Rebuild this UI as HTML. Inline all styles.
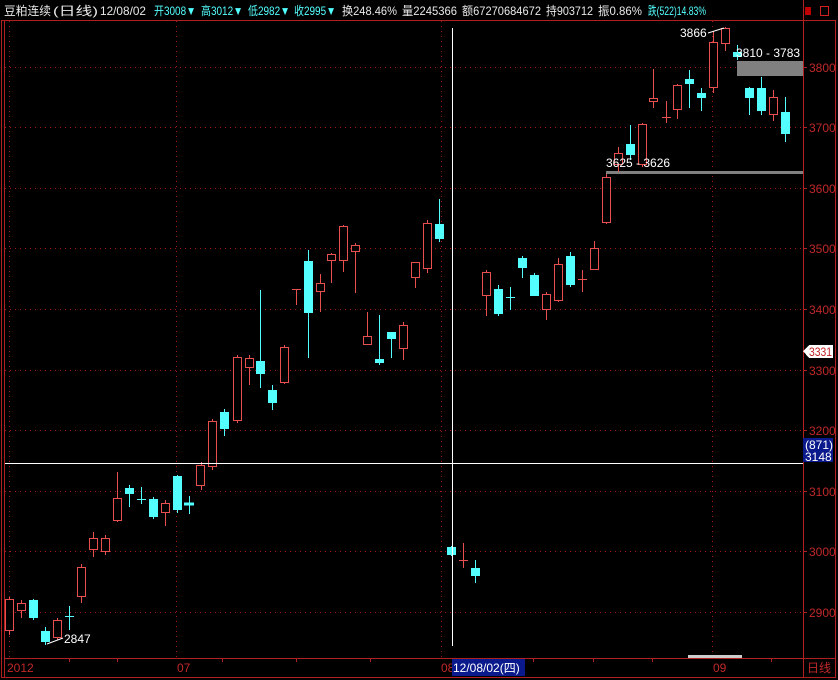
<!DOCTYPE html>
<html><head><meta charset="utf-8"><style>
html,body{margin:0;padding:0;background:#000;width:838px;height:680px;overflow:hidden}
svg{display:block}
text{font-family:"Liberation Sans","Noto Sans CJK SC",sans-serif;font-size:12px}
.r line,.r rect{stroke:#e85050;fill:#000}
.c line{stroke:#54ffff}
.c rect{fill:#54ffff;stroke:#54ffff}
.g{stroke:#a01818;stroke-dasharray:1 4;stroke-width:1}
.ax{fill:#c02828}
.w{fill:#e8e8e8}.cy{fill:#54ffff}
</style></head><body>
<svg width="838" height="680" viewBox="0 0 838 680" shape-rendering="crispEdges">
<rect x="0" y="0" width="838" height="680" fill="#000"/>
<!-- header -->
<text class="w" x="4" y="15" textLength="47" lengthAdjust="spacingAndGlyphs">豆粕连续</text>
<text class="w" x="53" y="15" textLength="45" lengthAdjust="spacingAndGlyphs">(日线)</text>
<text class="w" x="100" y="15" textLength="46" lengthAdjust="spacingAndGlyphs">12/08/02</text>
<text class="cy" x="154" y="15" textLength="42" lengthAdjust="spacingAndGlyphs">开3008▼</text>
<text class="cy" x="201" y="15" textLength="42" lengthAdjust="spacingAndGlyphs">高3012▼</text>
<text class="cy" x="248" y="15" textLength="42" lengthAdjust="spacingAndGlyphs">低2982▼</text>
<text class="cy" x="294" y="15" textLength="42" lengthAdjust="spacingAndGlyphs">收2995▼</text>
<text class="w" x="342" y="15" textLength="55" lengthAdjust="spacingAndGlyphs">换248.46%</text>
<text class="w" x="402" y="15" textLength="55" lengthAdjust="spacingAndGlyphs">量2245366</text>
<text class="w" x="462" y="15" textLength="79" lengthAdjust="spacingAndGlyphs">额67270684672</text>
<text class="w" x="546" y="15" textLength="47" lengthAdjust="spacingAndGlyphs">持903712</text>
<text class="w" x="598" y="15" textLength="44" lengthAdjust="spacingAndGlyphs">振0.86%</text>
<text class="cy" x="648" y="15" textLength="58" lengthAdjust="spacingAndGlyphs">跌(522)14.83%</text>
<rect x="805" y="7" width="6" height="8" fill="#c00000"/>
<rect x="820.5" y="6.5" width="8" height="9" fill="none" stroke="#d02020"/>
<!-- frame -->
<rect x="1.5" y="20.5" width="834" height="657" fill="none" stroke="#b02020"/>
<line x1="4.5" y1="21" x2="4.5" y2="677" stroke="#b02020"/>
<line x1="803.5" y1="0" x2="803.5" y2="677" stroke="#b02020"/>
<line x1="5" y1="658.5" x2="835" y2="658.5" stroke="#b02020"/>
<!-- grid -->
<g class="g">
<line x1="5" y1="67.5" x2="803" y2="67.5"/><line x1="5" y1="127.5" x2="803" y2="127.5"/>
<line x1="5" y1="188.5" x2="803" y2="188.5"/><line x1="5" y1="248.5" x2="803" y2="248.5"/>
<line x1="5" y1="309.5" x2="803" y2="309.5"/><line x1="5" y1="370.5" x2="803" y2="370.5"/>
<line x1="5" y1="430.5" x2="803" y2="430.5"/><line x1="5" y1="491.5" x2="803" y2="491.5"/>
<line x1="5" y1="551.5" x2="803" y2="551.5"/><line x1="5" y1="612.5" x2="803" y2="612.5"/>
<line x1="9.5" y1="21" x2="9.5" y2="658"/><line x1="176.5" y1="21" x2="176.5" y2="658"/>
<line x1="441.5" y1="21" x2="441.5" y2="658"/><line x1="712.5" y1="21" x2="712.5" y2="658"/>
</g>
<!-- axis labels -->
<g class="ax">
<text x="809" y="72">3800</text><text x="809" y="132">3700</text><text x="809" y="193">3600</text>
<text x="809" y="253">3500</text><text x="809" y="314">3400</text><text x="809" y="375">3300</text>
<text x="809" y="435">3200</text><text x="809" y="496">3100</text><text x="809" y="556">3000</text>
<text x="809" y="617">2900</text>
<text x="7" y="672">2012</text><text x="177" y="672">07</text><text x="441" y="672">08</text>
<text x="713" y="672">09</text><text x="807" y="672">日线</text>
</g>
<g stroke="#b02020">
<line x1="803" y1="67.5" x2="807" y2="67.5"/><line x1="803" y1="127.5" x2="807" y2="127.5"/><line x1="803" y1="188.5" x2="807" y2="188.5"/><line x1="803" y1="248.5" x2="807" y2="248.5"/><line x1="803" y1="309.5" x2="807" y2="309.5"/><line x1="803" y1="370.5" x2="807" y2="370.5"/><line x1="803" y1="430.5" x2="807" y2="430.5"/><line x1="803" y1="491.5" x2="807" y2="491.5"/><line x1="803" y1="551.5" x2="807" y2="551.5"/><line x1="803" y1="612.5" x2="807" y2="612.5"/>
<line x1="69.5" y1="659" x2="69.5" y2="662"/><line x1="117.5" y1="659" x2="117.5" y2="662"/><line x1="222.5" y1="659" x2="222.5" y2="662"/><line x1="296.5" y1="659" x2="296.5" y2="662"/><line x1="370.5" y1="659" x2="370.5" y2="662"/><line x1="533.5" y1="659" x2="533.5" y2="662"/><line x1="593.5" y1="659" x2="593.5" y2="662"/><line x1="652.5" y1="659" x2="652.5" y2="662"/><line x1="771.5" y1="659" x2="771.5" y2="662"/>
</g>
<!-- price box 3331 -->
<polygon points="803,351 809,345 833,345 833,358 809,358" fill="#fff"/>
<text x="809" y="356" fill="#c02020" textLength="23" lengthAdjust="spacingAndGlyphs">3331</text>
<rect x="803" y="438" width="30" height="24" fill="#0a1a8c"/>
<text x="805" y="449" fill="#fff">(871)</text><text x="805" y="461" fill="#fff">3148</text>
<rect x="452" y="659" width="73" height="17" fill="#0a1a8c"/>
<text x="453" y="672" fill="#fff">12/08/02(四)</text>
<rect x="688" y="655" width="54" height="3" fill="#ccc"/>
<!-- markers -->
<rect x="737" y="61" width="66" height="15" fill="#808080"/>
<rect x="606" y="171" width="197" height="3" fill="#808080"/>
<!-- candles red -->
<g class="r">
<line x1="9.5" y1="597" x2="9.5" y2="635"/><rect x="5.5" y="599.5" width="8" height="31"/>
<line x1="21.5" y1="600" x2="21.5" y2="618"/><rect x="17.5" y="603.5" width="8" height="7"/>
<line x1="57.5" y1="618" x2="57.5" y2="640"/><rect x="53.5" y="620.5" width="8" height="17"/>
<line x1="81.5" y1="564" x2="81.5" y2="603"/><rect x="77.5" y="567.5" width="8" height="29"/>
<line x1="93.5" y1="532" x2="93.5" y2="557"/><rect x="89.5" y="538.5" width="8" height="11"/>
<line x1="105.5" y1="535" x2="105.5" y2="555"/><rect x="101.5" y="538.5" width="8" height="13"/>
<line x1="117.5" y1="472" x2="117.5" y2="522"/><rect x="113.5" y="498.5" width="8" height="22"/>
<line x1="165.5" y1="500" x2="165.5" y2="526"/><rect x="161.5" y="503.5" width="8" height="9"/>
<line x1="201.5" y1="462" x2="201.5" y2="490"/><rect x="196.5" y="465.5" width="8" height="20"/>
<line x1="212.5" y1="419" x2="212.5" y2="470"/><rect x="208.5" y="421.5" width="8" height="45"/>
<line x1="237.5" y1="355" x2="237.5" y2="423"/><rect x="233.5" y="357.5" width="8" height="63"/>
<line x1="249.5" y1="355" x2="249.5" y2="385"/><rect x="245.5" y="358.5" width="8" height="9"/>
<line x1="284.5" y1="345" x2="284.5" y2="384"/><rect x="280.5" y="347.5" width="8" height="35"/>
<line x1="296.5" y1="289.5" x2="296.5" y2="305"/><line x1="292" y1="289.5" x2="301" y2="289.5"/>
<line x1="320.5" y1="274" x2="320.5" y2="312"/><rect x="316.5" y="283.5" width="8" height="8"/>
<line x1="331.5" y1="253" x2="331.5" y2="283"/><rect x="327.5" y="254.5" width="8" height="6"/>
<line x1="343.5" y1="225" x2="343.5" y2="272"/><rect x="339.5" y="226.5" width="8" height="34"/>
<line x1="355.5" y1="243" x2="355.5" y2="293"/><rect x="351.5" y="245.5" width="8" height="6"/>
<line x1="367.5" y1="312" x2="367.5" y2="344"/><rect x="363.5" y="336.5" width="8" height="8"/>
<line x1="403.5" y1="322" x2="403.5" y2="360"/><rect x="399.5" y="325.5" width="8" height="23"/>
<line x1="415.5" y1="262" x2="415.5" y2="288"/><rect x="411.5" y="262.5" width="8" height="15"/>
<line x1="427.5" y1="220" x2="427.5" y2="273"/><rect x="423.5" y="223.5" width="8" height="45"/>
<line x1="463.5" y1="543" x2="463.5" y2="568"/><line x1="459" y1="560.5" x2="468" y2="560.5"/>
<line x1="486.5" y1="270" x2="486.5" y2="316"/><rect x="482.5" y="272.5" width="8" height="23"/>
<line x1="546.5" y1="292" x2="546.5" y2="320"/><rect x="542.5" y="294.5" width="8" height="15"/>
<line x1="558.5" y1="258" x2="558.5" y2="302"/><rect x="554.5" y="264.5" width="8" height="36"/>
<line x1="582.5" y1="270" x2="582.5" y2="292"/><line x1="578" y1="279.5" x2="587" y2="279.5"/>
<line x1="594.5" y1="241" x2="594.5" y2="270"/><rect x="590.5" y="248.5" width="8" height="21"/>
<line x1="606.5" y1="174" x2="606.5" y2="224"/><rect x="602.5" y="177.5" width="8" height="45"/>
<line x1="618.5" y1="147" x2="618.5" y2="172"/><rect x="614.5" y="153.5" width="8" height="11"/>
<line x1="642.5" y1="123" x2="642.5" y2="167"/><rect x="638.5" y="124.5" width="8" height="40"/>
<line x1="653.5" y1="69" x2="653.5" y2="108"/><rect x="649.5" y="98.5" width="8" height="3"/>
<line x1="666.5" y1="101" x2="666.5" y2="123"/><line x1="662" y1="117.5" x2="671" y2="117.5"/>
<line x1="677.5" y1="84" x2="677.5" y2="119"/><rect x="673.5" y="85.5" width="8" height="24"/>
<line x1="713.5" y1="31" x2="713.5" y2="93"/><rect x="709.5" y="42.5" width="8" height="45"/>
<line x1="725.5" y1="27" x2="725.5" y2="51"/><rect x="721.5" y="28.5" width="8" height="15"/>
<line x1="773.5" y1="90" x2="773.5" y2="121"/><rect x="769.5" y="97.5" width="8" height="17"/>
</g>
<!-- candles cyan -->
<g class="c">
<line x1="33.5" y1="599" x2="33.5" y2="620"/><rect x="29.5" y="600.5" width="8" height="17"/>
<line x1="45.5" y1="627" x2="45.5" y2="645"/><rect x="41.5" y="631.5" width="8" height="10"/>
<line x1="69.5" y1="606" x2="69.5" y2="630"/><line x1="65" y1="616.5" x2="74" y2="616.5"/>
<line x1="129.5" y1="485" x2="129.5" y2="507"/><rect x="125.5" y="488.5" width="8" height="5"/>
<line x1="141.5" y1="487" x2="141.5" y2="504"/><line x1="137" y1="499.5" x2="146" y2="499.5"/>
<line x1="153.5" y1="497" x2="153.5" y2="519"/><rect x="149.5" y="499.5" width="8" height="17"/>
<line x1="177.5" y1="475" x2="177.5" y2="513"/><rect x="173.5" y="476.5" width="8" height="33"/>
<line x1="189.5" y1="496" x2="189.5" y2="514"/><rect x="184.5" y="503" width="9" height="2"/>
<line x1="224.5" y1="409" x2="224.5" y2="436"/><rect x="220.5" y="412.5" width="8" height="16"/>
<line x1="260.5" y1="290" x2="260.5" y2="388"/><rect x="256.5" y="361.5" width="8" height="12"/>
<line x1="272.5" y1="385" x2="272.5" y2="410"/><rect x="268.5" y="390.5" width="8" height="12"/>
<line x1="308.5" y1="250" x2="308.5" y2="358"/><rect x="304.5" y="261.5" width="8" height="51"/>
<line x1="379.5" y1="315" x2="379.5" y2="365"/><rect x="375.5" y="359.5" width="8" height="3"/>
<line x1="391.5" y1="332" x2="391.5" y2="358"/><rect x="387.5" y="332.5" width="8" height="6"/>
<line x1="439.5" y1="199" x2="439.5" y2="242"/><rect x="435.5" y="224.5" width="8" height="14"/>
<line x1="451.5" y1="546" x2="451.5" y2="556"/><rect x="447.5" y="547.5" width="8" height="7"/>
<line x1="475.5" y1="560" x2="475.5" y2="583"/><rect x="471.5" y="568.5" width="8" height="7"/>
<line x1="498.5" y1="285" x2="498.5" y2="316"/><rect x="494.5" y="289.5" width="8" height="24"/>
<line x1="510.5" y1="287" x2="510.5" y2="310"/><line x1="506" y1="297.5" x2="515" y2="297.5"/>
<line x1="522.5" y1="256" x2="522.5" y2="278"/><rect x="518.5" y="258.5" width="8" height="9"/>
<line x1="534.5" y1="273" x2="534.5" y2="295"/><rect x="530.5" y="275.5" width="8" height="20"/>
<line x1="570.5" y1="252" x2="570.5" y2="287"/><rect x="566.5" y="256.5" width="8" height="28"/>
<line x1="630.5" y1="125" x2="630.5" y2="160"/><rect x="626.5" y="144.5" width="8" height="10"/>
<line x1="689.5" y1="70" x2="689.5" y2="108"/><rect x="685.5" y="79.5" width="8" height="4"/>
<line x1="701.5" y1="88" x2="701.5" y2="111"/><rect x="697.5" y="93.5" width="8" height="4"/>
<line x1="737.5" y1="45" x2="737.5" y2="60"/><rect x="733.5" y="52.5" width="8" height="4"/>
<line x1="749.5" y1="87" x2="749.5" y2="115"/><rect x="745.5" y="88.5" width="8" height="9"/>
<line x1="761.5" y1="77" x2="761.5" y2="115"/><rect x="757.5" y="88.5" width="8" height="22"/>
<line x1="785.5" y1="97" x2="785.5" y2="142"/><rect x="781.5" y="112.5" width="8" height="21"/>
</g>
<!-- labels -->
<text x="680" y="37" fill="#fff">3866</text>
<line x1="708" y1="33" x2="724" y2="28" stroke="#fff" shape-rendering="auto"/>
<text x="736" y="57" fill="#fff">3810 - 3783</text>
<text x="606" y="167" fill="#fff">3625 - 3626</text>
<text x="64" y="643" fill="#fff">2847</text>
<line x1="47" y1="644" x2="63" y2="638" stroke="#fff" shape-rendering="auto"/>
<!-- crosshair -->
<line x1="452.5" y1="28" x2="452.5" y2="646" stroke="#fff"/>
<line x1="5" y1="463.5" x2="803" y2="463.5" stroke="#fff"/>
</svg>
</body></html>
